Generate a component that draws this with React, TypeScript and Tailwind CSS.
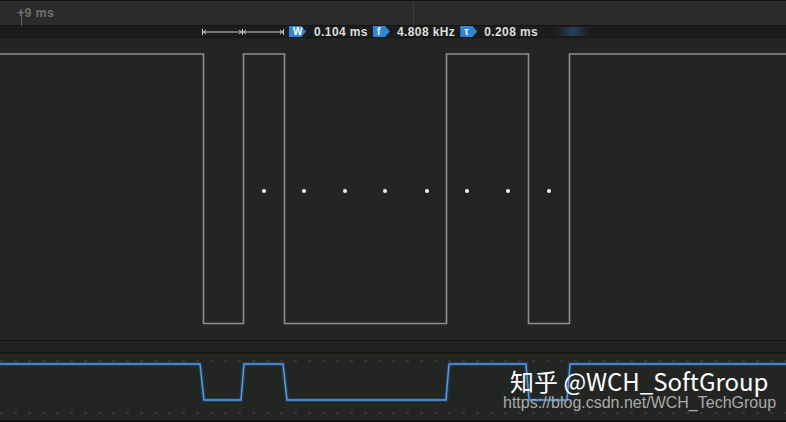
const FONT = { fontFamily: '"Liberation Sans", Arial, sans-serif' }

function Badge({ label }: { label: string }) {
  return (
    <span className="inline-flex h-[11px] w-[17px] shrink-0 items-center bg-[#2f86d6] pl-[4px] text-[10px] font-bold leading-none tracking-normal text-white [clip-path:polygon(0_0,72%_0,100%_50%,72%_100%,0_100%)]">
      {label}
    </span>
  )
}

function MeasureArrows() {
  return (
    <svg width="86" height="12" viewBox="0 0 86 12" className="shrink-0">
      <g stroke="#cfcfcf" strokeWidth="1" fill="none">
        <path d="M0.5 3 V9 M40.5 3 V9 M81.5 3 V9" />
        <path d="M1 6 H40 M41 6 H81" />
        <path d="M4 4 L1.5 6 L4 8 M37 4 L39.5 6 L37 8 M44 4 L41.5 6 L44 8 M78 4 L80.5 6 L78 8" />
      </g>
    </svg>
  )
}

function MainChannel() {
  const dots = [264, 304, 345, 385, 427, 467, 508, 549]
  return (
    <svg width="786" height="302" viewBox="0 0 786 302" className="block">
      <path
        d="M0 16 H203.5 V285.5 H243.5 V16 H284.5 V285.5 H446.5 V16 H528.5 V285.5 H569.5 V16 H786"
        stroke="#8e8e8c"
        strokeWidth="1.6"
        fill="none"
      />
      {dots.map((x) => (
        <circle key={x} cx={x} cy={153} r={2} fill="#f2f2f2" />
      ))}
    </svg>
  )
}

const LOGIC = "M0 8 H200 L204 44 H241 L244 8 H283 L287 44 H446 L449 8 H526 L529 44 H567 L570 8 H786"

function LogicChannel() {
  return (
    <svg width="786" height="64" viewBox="0 0 786 64" className="block">
      <path d="M0 5 H786 M0 57 H786" stroke="#4a4c4a" strokeWidth="1" strokeDasharray="3 11" />
      <path d={LOGIC} stroke="#1d3a5c" strokeWidth="4" fill="none" />
      <path d={LOGIC} stroke="#5f9ad6" strokeWidth="1.5" fill="none" />
    </svg>
  )
}

export default function App() {
  return (
    <div className="relative h-[422px] w-[786px] overflow-hidden bg-[#232523]" style={FONT}>
      {/* ruler */}
      <div className="relative h-[25px] border-t border-[#111211] bg-[#2a2b2a]">
        <div className="absolute left-[21px] top-[8px] h-[17px] w-px bg-[#5c5d5c]" />
        <div className="absolute left-[413px] top-0 h-[25px] w-px bg-[#3a3b3a]" />
        <span className="absolute left-[17px] top-[3px] text-[12.5px] font-bold tracking-[0.3px] text-[#6e6f6e]">+9 ms</span>
      </div>

      {/* measurement bar */}
      <div className="flex h-[13px] items-center border-y border-[#131413] bg-[#1c1d1c] pl-[202px] text-[12px] font-bold tracking-[0.4px] text-[#dedede]">
        <MeasureArrows />
        <span className="ml-[1px] flex items-center leading-none">
          <Badge label="W" />
          <span className="ml-[8px] mr-[5px]">0.104 ms</span>
          <Badge label="f" />
          <span className="ml-[7px] mr-[5px]">4.808 kHz</span>
          <Badge label="τ" />
          <span className="ml-[7px]">0.208 ms</span>
        </span>
        <span className="ml-[18px] h-[9px] w-[34px] bg-gradient-to-r from-transparent via-[#2b4f78] to-transparent opacity-70" />
      </div>

      <MainChannel />

      {/* channel separator */}
      <div className="h-px bg-[#151615]" />
      <div className="h-[11px] bg-[#202220]" />
      <div className="h-px bg-[#0f100f]" />
      <div className="h-[2px] bg-[#1e201e]" />
      <div className="h-px bg-[#2a2716]" />

      <LogicChannel />
      <div className="h-[2px] bg-[#121312]" />

      {/* watermark */}
      <div className="absolute left-[510px] top-[369px] text-[24px] leading-none text-white" style={{ fontFamily: '"Noto Sans CJK SC", "Liberation Sans", sans-serif' }}>
        知乎 @WCH_SoftGroup
      </div>
      <div className="absolute left-[503px] top-[395px] text-[16px] leading-none text-[#a9aaa9]">
        https://blog.csdn.net/WCH_TechGroup
      </div>
    </div>
  )
}
